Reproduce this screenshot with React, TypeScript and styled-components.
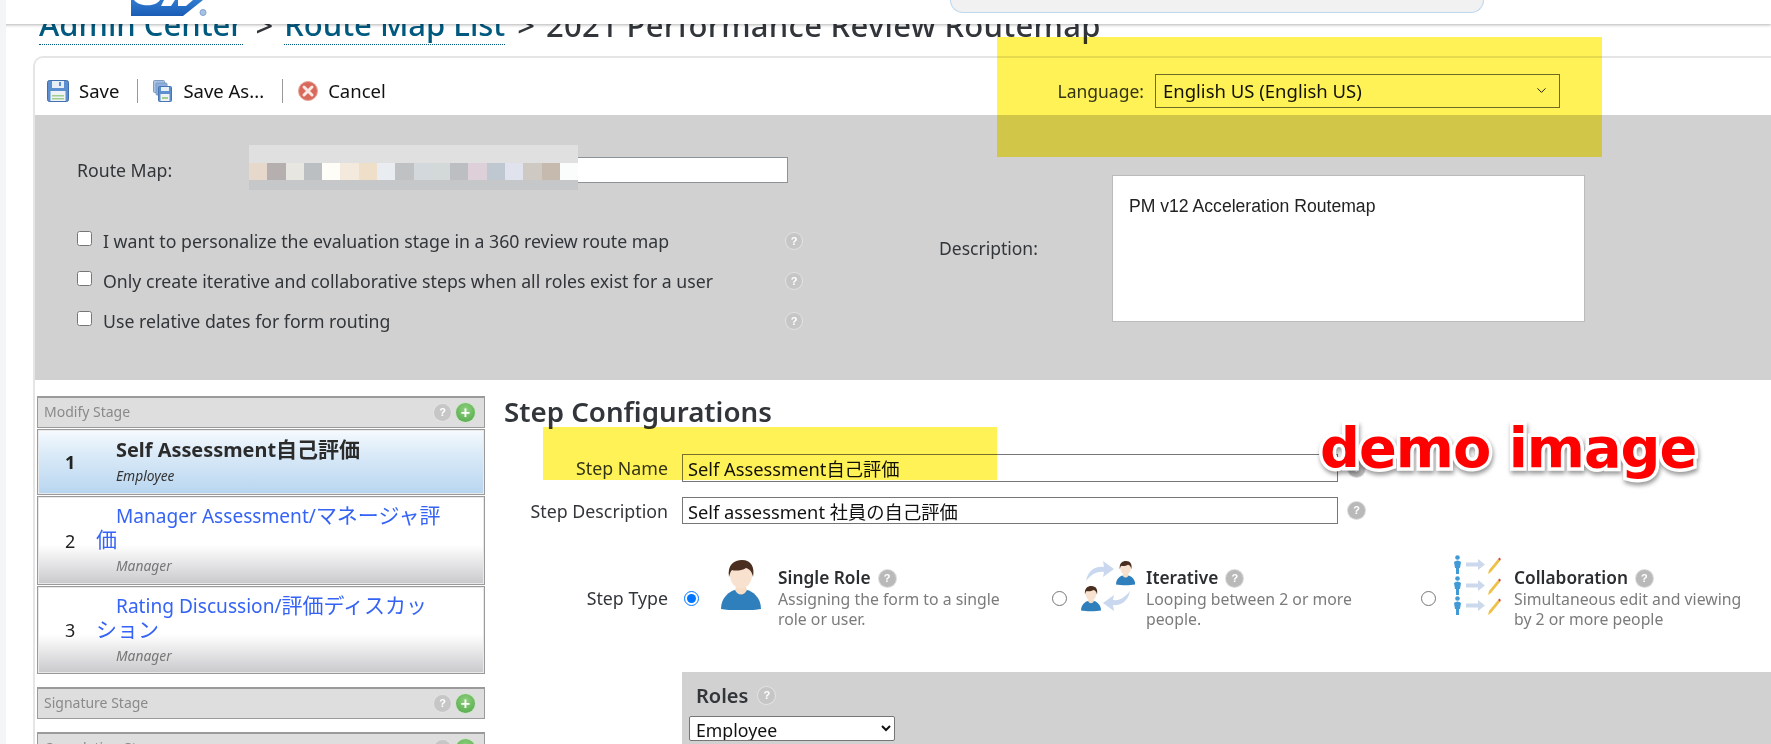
import React from "react";
import styled, { createGlobalStyle } from "styled-components";
import { ChevronDown } from "lucide-react";

const Global = createGlobalStyle`
  html, body { margin: 0; padding: 0; background: #fff; }
  body { font-family: "Noto Sans", "Noto Sans CJK JP", sans-serif; color: #32363a; overflow: hidden; }
  * { box-sizing: border-box; }
`;

const Page = styled.div`
  position: relative;
  width: 1771px;
  height: 744px;
  overflow: hidden;
  background: #fff;
  border-left: 6px solid #f3f5f7;
  margin: 0;
`;
const Header = styled.header`
  position: relative;
  z-index: 2;
  display: flex;
  align-items: flex-start;
  height: 24px;
  margin-left: -6px;
  padding-left: 131px;
  background: #fff;
  box-shadow: 0 1px 3px rgba(0, 0, 0, 0.3);
`;
const SearchShell = styled.div`
  width: 534px;
  height: 13px;
  margin-left: 741px;
  background: #f1f1f1;
  border: 1px solid #bcd6ef;
  border-top: 0;
  border-radius: 0 0 22px 22px;
`;
const Crumbs = styled.nav`
  display: flex;
  align-items: flex-end;
  height: 32px;
  margin-left: 33px;
  padding-bottom: 11px;
  overflow: hidden;
  white-space: nowrap;
  font-size: 31px;
  font-weight: 500;
  line-height: 40px;
`;
const CrumbLink = styled.span`
  color: #00597f;
  border-bottom: 1px dotted #00597f;
  line-height: 40px;
  height: 41px;
  flex: none;
`;
const CrumbSep = styled.span`
  margin: 0 11px 0 12px;
  color: #32363a;
  flex: none;
`;
const CrumbCurrent = styled.span`
  color: #32363a;
  letter-spacing: 0.3px;
  flex: none;
`;
const Card = styled.main`
  margin-left: 27px;
  height: 700px;
  border-top: 2px solid #e5e5e5;
  border-left: 2px solid #e5e5e5;
  border-top-left-radius: 10px;
`;
const Toolbar = styled.div`
  display: flex;
  align-items: center;
  height: 57px;
  padding: 8px 0 0 12px;
  font-size: 18.5px;
  color: #111;
`;
const ToolItem = styled.div<{ $gap: number; $end?: number }>`
  display: flex;
  align-items: center;
  gap: ${(p) => p.$gap}px;
  padding-right: ${(p) => p.$end ?? 0}px;
`;
const ToolDivider = styled.div`
  width: 1px;
  height: 24px;
  background: #999;
  margin-right: 15px;
`;
const LanguageGroup = styled.div`
  display: flex;
  align-items: center;
  gap: 11px;
  margin-left: auto;
  margin-right: 211px;
  font-size: 17.5px;
  color: #32363a;
`;
const LanguageSelect = styled.div`
  display: flex;
  align-items: center;
  justify-content: space-between;
  width: 405px;
  height: 34px;
  padding: 0 10px 0 7px;
  border: 1px solid #6f6f6f;
  background: #fff;
  color: #111;
  font-size: 18.5px;
`;
const TopPanel = styled.section`
  display: flex;
  align-items: flex-start;
  height: 265px;
  padding-left: 42px;
  background: #d1d1d1;
  font-size: 17.7px;
`;
const LeftForm = styled.div`
  width: 862px;
  padding-top: 42px;
`;
const RouteRow = styled.div`
  display: flex;
  align-items: center;
  height: 26px;
  margin-bottom: 38px;
`;
const RouteLabel = styled.label`
  width: 172px;
`;
const RouteInputWrap = styled.div`
  position: relative;
  width: 539px;
  height: 26px;
  background: #fff;
  border: 1px solid #8c9499;
`;
const Mosaic = styled.div`
  position: absolute;
  left: -1px;
  top: -13px;
  width: 329px;
  height: 45px;
  display: flex;
  flex-direction: column;
`;
const MosaicBand = styled.div<{ $h: number; $c: string }>`
  height: ${(p) => p.$h}px;
  background: ${(p) => p.$c};
  display: flex;
`;
const MosaicCell = styled.div<{ $c: string }>`
  width: 18px;
  flex: 1;
  background: ${(p) => p.$c};
`;
const CheckRow = styled.label`
  display: flex;
  align-items: center;
  width: 727px;
  height: 40px;
`;
const Check = styled.input`
  width: 15px;
  height: 15px;
  margin: 0 11px 6px 0;
`;
const Help = styled.span<{ $light?: boolean; $size?: number }>`
  display: inline-flex;
  align-items: center;
  justify-content: center;
  flex: none;
  width: ${(p) => p.$size ?? 17}px;
  height: ${(p) => p.$size ?? 17}px;
  border-radius: 50%;
  background: ${(p) => (p.$light ? "#c6c6c6" : "#b9b9b9")};
  box-shadow: ${(p) => (p.$light ? "0 0 0 1px #e2e2e2" : "0 0 0 1px #dcdcdc")};
  color: #fff;
  font: 700 11px/1 "Liberation Sans", sans-serif;
`;
const RowHelp = styled(Help)`
  margin-left: auto;
  margin-right: 2px;
`;
const DescColumn = styled.div`
  display: flex;
  align-items: center;
  padding-top: 60px;
`;
const DescLabel = styled.label`
  width: 173px;
  margin-bottom: 2px;
  font-size: 17.5px;
`;
const DescBox = styled.div`
  width: 473px;
  height: 147px;
  padding: 19px 16px;
  background: #fff;
  border: 1px solid #bbb;
  font: 17.6px/22px "Liberation Sans", sans-serif;
  color: #222;
`;
const Lower = styled.section`
  display: flex;
  padding: 16px 0 0 2px;
`;
const StageColumn = styled.aside`
  flex: none;
  width: 448px;
`;
const StageHead = styled.div<{ $gap?: number; $h?: number }>`
  display: flex;
  align-items: center;
  justify-content: space-between;
  height: ${(p) => p.$h ?? 32}px;
  padding: 0 9px 0 6px;
  margin-top: ${(p) => p.$gap ?? 0}px;
  margin-bottom: 1px;
  background: #dedede;
  border: 1px solid #9a9a9a;
  border-top-width: 2px;
  font-size: 14px;
  color: #8a8a8a;
`;
const StageName = styled.span`
  margin-bottom: 2px;
`;
const StageTools = styled.div`
  display: flex;
  align-items: center;
  gap: 5px;
`;
const PlusBadge = styled.span`
  display: inline-flex;
  align-items: center;
  justify-content: center;
  width: 19px;
  height: 19px;
  border-radius: 50%;
  background: radial-gradient(circle at 50% 35%, #8fd07d, #4da647);
  box-shadow: 0 0 0 1px #cfe5c8;
  color: #fff;
  font: 700 16px/1 "Liberation Sans", sans-serif;
`;
const Step = styled.div<{ $active?: boolean; $h: number }>`
  display: flex;
  align-items: center;
  height: ${(p) => p.$h}px;
  margin-bottom: 1px;
  border: 1px solid #9a9a9a;
  box-shadow: inset 0 0 0 1px #e9e9e9;
  background: ${(p) =>
    p.$active
      ? "linear-gradient(#f6fafe, #dcebf8 35%, #b8d6f0)"
      : "linear-gradient(#fff 0, #fff 55%, #c9c9cc 100%)"};
`;
const StepNum = styled.div<{ $active?: boolean }>`
  flex: none;
  width: 58px;
  padding-left: 27px;
  font-size: 18px;
  font-weight: ${(p) => (p.$active ? 700 : 400)};
  color: #222;
`;
const StepBody = styled.div`
  flex: 1;
  margin-top: -2px;
  padding-right: 40px;
`;
const StepTitle = styled.div<{ $active?: boolean }>`
  text-indent: 20px;
  font-size: ${(p) => (p.$active ? 19.9 : 19.1)}px;
  line-height: 23px;
  font-weight: ${(p) => (p.$active ? 700 : 400)};
  color: ${(p) => (p.$active ? "#2b2b2b" : "#3563f5")};
`;
const Cjk = styled.span`
  font-size: 21px;
`;
const StepRole = styled.div`
  padding-left: 20px;
  margin-top: 5px;
  font-size: 13.8px;
  line-height: 18px;
  font-style: italic;
  color: #777;
`;
const ActiveRole = styled(StepRole)`
  color: #333;
  margin-top: 6px;
`;
const ConfigColumn = styled.div`
  flex: 1;
  min-width: 0;
  margin-left: 19px;
`;
const ConfigTitle = styled.h2`
  margin: 0 0 28px;
  font-size: 27.7px;
  line-height: 30px;
  font-weight: 600;
  color: #32363a;
`;
const FormRow = styled.div<{ $mb?: number }>`
  display: flex;
  align-items: center;
  margin-bottom: ${(p) => p.$mb ?? 0}px;
`;
const FieldLabel = styled.label`
  flex: none;
  width: 164px;
  margin-right: 14px;
  text-align: right;
  font-size: 17.8px;
  color: #32363a;
`;
const FieldValue = styled.div<{ $h: number }>`
  display: flex;
  align-items: center;
  width: 656px;
  height: ${(p) => p.$h}px;
  padding: 0 5px;
  border: 1px solid #767676;
  font-size: 18.3px;
  color: #111;
  background: #fff;
`;
const FieldHelp = styled(Help)`
  margin-left: 10px;
`;
const TypeRow = styled.div`
  display: flex;
  align-items: center;
  height: 80px;
  margin-top: 34px;
`;
const TypeGrid = styled.div`
  display: grid;
  grid-template-columns: 368px 369px 340px;
  margin-left: 2px;
`;
const Option = styled.div`
  display: flex;
  align-items: center;
`;
const Radio = styled.input`
  flex: none;
  width: 15px;
  height: 15px;
  margin: 0;
`;
const IconSlot = styled.div<{ $l: number; $r: number; $w: number; $up: number }>`
  flex: none;
  width: ${(p) => p.$w}px;
  margin: ${(p) => -p.$up}px ${(p) => p.$r}px 0 ${(p) => p.$l}px;
  line-height: 0;
`;
const OptionText = styled.div`
  flex: none;
  width: 240px;
  font-size: 15.8px;
  line-height: 20px;
  color: #7b7b7b;
`;
const OptionTitle = styled.div`
  display: flex;
  align-items: center;
  gap: 8px;
  font-size: 17.3px;
  font-weight: 600;
  line-height: 22px;
  color: #2b2e31;
`;
const RolesPanel = styled.div`
  height: 72px;
  margin: 34px 0 0 178px;
  padding: 11px 7px 0;
  background: #d1d1d1;
`;
const RolesHead = styled.div`
  display: flex;
  align-items: center;
  gap: 10px;
  height: 24px;
  margin: 0 0 9px 7px;
  font-size: 20px;
  font-weight: 600;
`;
const RoleSelect = styled.select`
  display: block;
  width: 206px;
  height: 25px;
  padding: 0 2px;
  background: #fff;
  border: 1px solid #767676;
  border-radius: 2px;
  font: 17.7px/20px "Noto Sans", sans-serif;
  color: #111;
`;
const Highlight = styled.div<{ $x: number; $y: number; $w: number; $h: number }>`
  position: absolute;
  z-index: 3;
  left: ${(p) => p.$x - 6}px;
  top: ${(p) => p.$y}px;
  width: ${(p) => p.$w}px;
  height: ${(p) => p.$h}px;
  background: #fff257;
  mix-blend-mode: multiply;
  pointer-events: none;
`;
const Stamp = styled.div`
  position: absolute;
  z-index: 4;
  left: 1314px;
  top: 412px;
  font: 700 55.8px/72px "DejaVu Sans", sans-serif;
  letter-spacing: -1px;
  white-space: nowrap;
  color: #ff0000;
  -webkit-text-stroke: 7px #fff;
  paint-order: stroke fill;
  filter: drop-shadow(1px 3px 2px rgba(0, 0, 0, 0.4));
`;

const SapLogo = () => (
  <svg width="78" height="18" viewBox="0 0 78 18">
    <defs>
      <linearGradient id="sapb" x1="0" y1="0" x2="0" y2="1">
        <stop offset="0" stopColor="#2f7bd0" />
        <stop offset="1" stopColor="#1a5cb5" />
      </linearGradient>
    </defs>
    <polygon points="0,0 72,0 52,16 0,16" fill="url(#sapb)" />
    <path d="M3 0 C8 7 25 7 29 0 Z M33 0 L30 6 H40 L44 0 Z M47 0 V6 H55 L62 0 Z" fill="#fff" />
    <circle cx="72" cy="12.5" r="3" fill="#a8c2e4" stroke="#7fa3d2" strokeWidth="1" />
  </svg>
);

const SaveIcon = ({ w = 22 }: { w?: number }) => (
  <svg width={w} height={w} viewBox="0 0 22 22">
    <rect x="0.5" y="0.5" width="21" height="21" rx="2" fill="#5b8fd0" stroke="#3f6fae" />
    <rect x="5" y="1" width="12" height="7" fill="#e6eef8" />
    <rect x="12" y="2" width="2" height="4" fill="#5b8fd0" />
    <rect x="3.5" y="11" width="15" height="10" fill="#eef2f4" />
    <rect x="5" y="15" width="12" height="1.5" fill="#9fce8f" />
    <rect x="5" y="18" width="12" height="1.5" fill="#9fce8f" />
  </svg>
);
const SaveAsIcon = () => (
  <svg width="19" height="22" viewBox="0 0 19 22">
    <rect x="0.5" y="0.5" width="11" height="12" rx="1" fill="#a9c2e2" stroke="#7c9cc6" />
    <rect x="3" y="3" width="11" height="12" rx="1" fill="#8eaedb" stroke="#7c9cc6" />
    <rect x="5.5" y="6.5" width="13" height="15" rx="1" fill="#5b8fd0" stroke="#4775b2" />
    <rect x="8" y="7" width="8" height="4" fill="#e6eef8" />
    <rect x="7.5" y="14" width="9" height="7" fill="#eef2f4" />
    <rect x="9" y="17" width="6" height="2" fill="#9fce8f" />
  </svg>
);
const CancelIcon = () => (
  <svg width="20" height="20" viewBox="0 0 20 20">
    <circle cx="10" cy="10" r="9.5" fill="#d9695a" stroke="#e3a59b" />
    <path d="M6 6 L14 14 M14 6 L6 14" stroke="#fbe9e6" strokeWidth="3" strokeLinecap="round" />
  </svg>
);
const Person = ({ x, y, s }: { x: number; y: number; s: number }) => (
  <g transform={`translate(${x} ${y}) scale(${s})`}>
    <path d="M0 49 C0 37 9 31 14 30 L26 30 C31 31 40 37 40 49 C30 51 10 51 0 49 Z" fill="#2f7fbd" />
    <path d="M14 30 C17 36 23 36 26 30 L24 24 H16 Z" fill="#f6ddc6" />
    <ellipse cx="20" cy="15" rx="11" ry="13.5" fill="#f8e2cf" />
    <path d="M8 17 C6 5 13 0 21 0 C30 0 34 7 32 17 C31 12 29 9 25 8 C21 11 13 11 11 10 C9 12 9 14 8 17 Z" fill="#4a2e20" />
  </g>
);
const SingleIcon = () => (
  <svg width="40" height="50" viewBox="0 0 40 50"><Person x={0} y={0} s={1} /></svg>
);
const IterativeIcon = () => (
  <svg width="54" height="52" viewBox="0 0 54 52">
    <path d="M5 21 C7 10 15 6 23 7 L22 1 L33 9 L22 17 L23 12 C15 11 10 15 5 21 Z" fill="#c9d8ee" />
    <path d="M49 31 C47 42 39 46 32 45 L33 51 L22 43 L33 35 L32 40 C39 41 44 37 49 31 Z" fill="#c9d8ee" />
    <Person x={35} y={1} s={0.48} />
    <Person x={0} y={26} s={0.5} />
  </svg>
);
const CollabRow = ({ y }: { y: number }) => (
  <g transform={`translate(0 ${y})`}>
    <circle cx="4.5" cy="2.5" r="2.3" fill="#3f9ad6" />
    <path d="M1 7 Q4.5 4 8 7 L7 13 H6 V19 H3 V13 H2 Z" fill="#3f9ad6" />
    <path d="M13 7.5 H25 V4 L32 9.5 L25 15 V11.5 H13 Z" fill="#ccd9ec" />
    <path d="M35 19 L36 15 L45 4 L47 6 L38 17 Z" fill="#eec24a" />
    <path d="M45 4 L46.5 2.5 L47.8 4 L47 6 Z" fill="#d8483a" />
  </g>
);
const CollabIcon = () => (
  <svg width="48" height="60" viewBox="0 0 48 60">
    <CollabRow y={0} />
    <CollabRow y={21} />
    <CollabRow y={41} />
  </svg>
);

const mosaicColors = ["#e6d9cc","#b5b0af","#e8e6e1","#bcbfc1","#fffdf8","#f3e9dd","#f0dfc8","#e9edf1","#bfc1c3","#d3d8dc","#d3d8d9","#bcbec1","#ddd0d8","#bfc8d0","#e0e3ee","#cec9c2","#c6b9ae","#fbfdfd"];

const checks = [
  "I want to personalize the evaluation stage in a 360 review route map",
  "Only create iterative and collaborative steps when all roles exist for a user",
  "Use relative dates for form routing",
];

export default function App() {
  return (
    <Page>
      <Global />
      <Header>
        <SapLogo />
        <SearchShell />
      </Header>
      <Crumbs>
        <CrumbLink>Admin Center</CrumbLink>
        <CrumbSep>&gt;</CrumbSep>
        <CrumbLink>Route Map List</CrumbLink>
        <CrumbSep>&gt;</CrumbSep>
        <CrumbCurrent>2021 Performance Review Routemap</CrumbCurrent>
      </Crumbs>
      <Card>
        <Toolbar>
          <ToolItem $gap={10} $end={18}><SaveIcon /><span>Save</span></ToolItem>
          <ToolDivider />
          <ToolItem $gap={11} $end={18}><SaveAsIcon /><span>Save As...</span></ToolItem>
          <ToolDivider />
          <ToolItem $gap={10}><CancelIcon /><span>Cancel</span></ToolItem>
          <LanguageGroup>
            <span>Language:</span>
            <LanguageSelect>
              <span>English US (English US)</span>
              <ChevronDown size={15} strokeWidth={1.5} />
            </LanguageSelect>
          </LanguageGroup>
        </Toolbar>
        <TopPanel>
          <LeftForm>
            <RouteRow>
              <RouteLabel>Route Map:</RouteLabel>
              <RouteInputWrap>
                <Mosaic>
                  <MosaicBand $h={18} $c="#e0e0e0" />
                  <MosaicBand $h={17} $c="#fff">
                    {mosaicColors.map((c, i) => <MosaicCell key={i} $c={c} />)}
                  </MosaicBand>
                  <MosaicBand $h={10} $c="#c6c7c9" />
                </Mosaic>
              </RouteInputWrap>
            </RouteRow>
            {checks.map((t) => (
              <CheckRow key={t}>
                <Check type="checkbox" />
                <span>{t}</span>
                <RowHelp $light $size={16}>?</RowHelp>
              </CheckRow>
            ))}
          </LeftForm>
          <DescColumn>
            <DescLabel>Description:</DescLabel>
            <DescBox>PM v12 Acceleration Routemap</DescBox>
          </DescColumn>
        </TopPanel>
        <Lower>
          <StageColumn>
            <StageHead>
              <StageName>Modify Stage</StageName>
              <StageTools><Help $light>?</Help><PlusBadge>+</PlusBadge></StageTools>
            </StageHead>
            <Step $active $h={66}>
              <StepNum $active>1</StepNum>
              <StepBody>
                <StepTitle $active>Self Assessment<Cjk>自己評価</Cjk></StepTitle>
                <ActiveRole>Employee</ActiveRole>
              </StepBody>
            </Step>
            <Step $h={89}>
              <StepNum>2</StepNum>
              <StepBody>
                <StepTitle>Manager Assessment/<Cjk>マネージャ評価</Cjk></StepTitle>
                <StepRole>Manager</StepRole>
              </StepBody>
            </Step>
            <Step $h={88}>
              <StepNum>3</StepNum>
              <StepBody>
                <StepTitle>Rating Discussion/<Cjk>評価ディスカッション</Cjk></StepTitle>
                <StepRole>Manager</StepRole>
              </StepBody>
            </Step>
            <StageHead $gap={13}>
              <StageName>Signature Stage</StageName>
              <StageTools><Help $light>?</Help><PlusBadge>+</PlusBadge></StageTools>
            </StageHead>
            <StageHead $gap={13}>
              <StageName>Completion Stage</StageName>
              <StageTools><Help $light>?</Help><PlusBadge>+</PlusBadge></StageTools>
            </StageHead>
          </StageColumn>
          <ConfigColumn>
            <ConfigTitle>Step Configurations</ConfigTitle>
            <FormRow $mb={15}>
              <FieldLabel>Step Name</FieldLabel>
              <FieldValue $h={28}>Self Assessment自己評価</FieldValue>
              <FieldHelp>?</FieldHelp>
            </FormRow>
            <FormRow>
              <FieldLabel>Step Description</FieldLabel>
              <FieldValue $h={27}>Self assessment 社員の自己評価</FieldValue>
              <FieldHelp>?</FieldHelp>
            </FormRow>
            <TypeRow>
              <FieldLabel>Step Type</FieldLabel>
              <TypeGrid>
                <Option>
                  <Radio type="radio" name="t" defaultChecked />
                  <IconSlot $l={22} $r={17} $w={40} $up={26}><SingleIcon /></IconSlot>
                  <OptionText>
                    <OptionTitle>Single Role <Help>?</Help></OptionTitle>
                    Assigning the form to a single role or user.
                  </OptionText>
                </Option>
                <Option>
                  <Radio type="radio" name="t" />
                  <IconSlot $l={14} $r={11} $w={54} $up={24}><IterativeIcon /></IconSlot>
                  <OptionText>
                    <OptionTitle>Iterative <Help>?</Help></OptionTitle>
                    Looping between 2 or more people.
                  </OptionText>
                </Option>
                <Option>
                  <Radio type="radio" name="t" />
                  <IconSlot $l={17} $r={13} $w={48} $up={26}><CollabIcon /></IconSlot>
                  <OptionText>
                    <OptionTitle>Collaboration <Help>?</Help></OptionTitle>
                    Simultaneous edit and viewing by 2 or more people
                  </OptionText>
                </Option>
              </TypeGrid>
            </TypeRow>
            <RolesPanel>
              <RolesHead>Roles <Help $light>?</Help></RolesHead>
              <RoleSelect defaultValue="Employee">
                <option>Employee</option>
                <option>Manager</option>
              </RoleSelect>
            </RolesPanel>
          </ConfigColumn>
        </Lower>
      </Card>
      <Highlight $x={997} $y={37} $w={605} $h={120} />
      <Highlight $x={543} $y={427} $w={454} $h={53} />
      <Stamp>demo image</Stamp>
    </Page>
  );
}
